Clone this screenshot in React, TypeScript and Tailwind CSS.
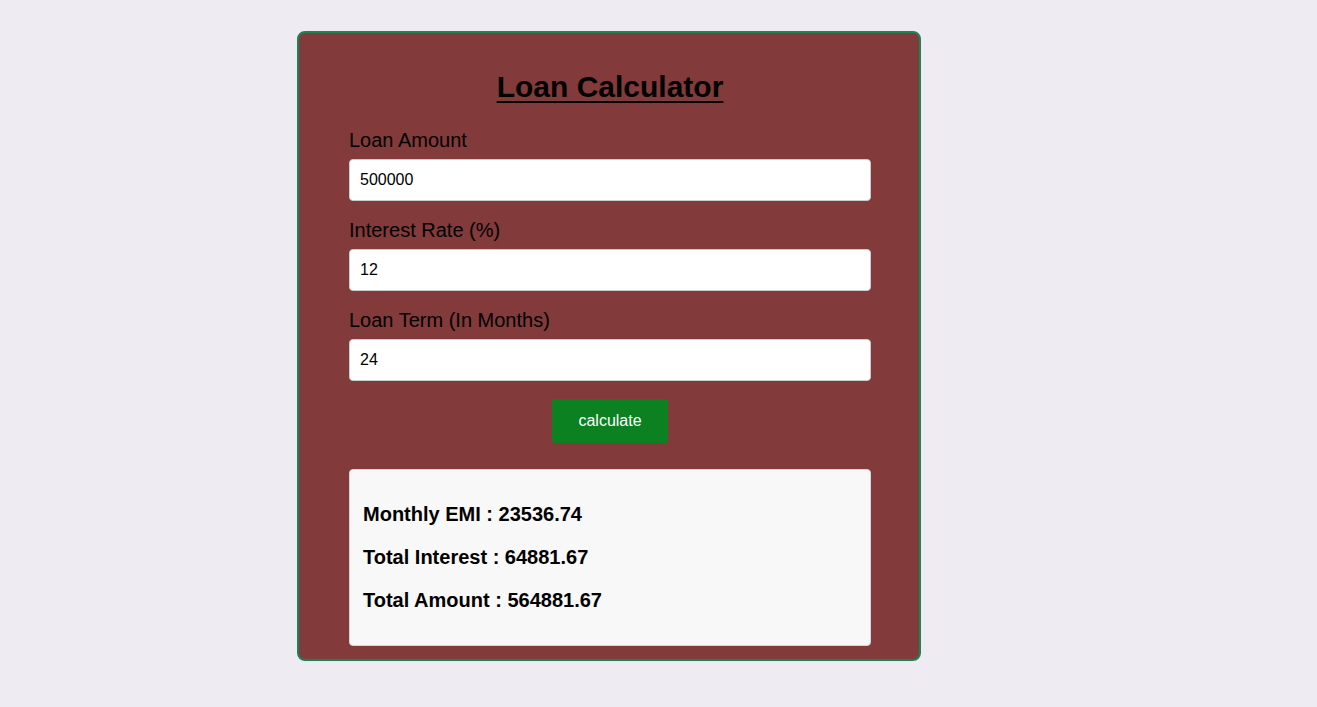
export default function App() {
  const fields = [
    { label: "Loan Amount", value: "500000" },
    { label: "Interest Rate (%)", value: "12" },
    { label: "Loan Term (In Months)", value: "24" },
  ];

  return (
    <div className="min-h-screen bg-[#eeebf2] pt-[31px] font-['Liberation_Sans',Arial,sans-serif]">
      <div className="ml-[297px] w-[624px] rounded-[8px] border-2 border-[#1b8456] bg-[#833a3b] pb-[13px] pl-[50px] pr-[48px] pt-[37px]">
        <h1 className="text-center text-[30px] font-bold leading-[34px] text-black underline decoration-2 underline-offset-[4px]">
          Loan Calculator
        </h1>

        <div className="mt-[25px]">
          {fields.map((f) => (
            <div key={f.label} className="mb-[18px] last:mb-0">
              <label className="mb-[7px] block text-[20px] leading-[23px] text-black">
                {f.label}
              </label>
              <input
                type="text"
                defaultValue={f.value}
                className="block h-[42px] w-full rounded-[4px] border border-[#cccccc] bg-white px-[10px] text-[16px] text-black outline-none"
              />
            </div>
          ))}
        </div>

        <div className="mt-[18px] flex justify-center">
          <button
            type="button"
            className="h-[44px] w-[116px] rounded-[3px] bg-[#0b8122] text-[16px] text-white"
          >
            calculate
          </button>
        </div>

        <div className="mt-[26px] rounded-[4px] border border-[#d6d6d6] bg-[#f8f8f8] px-[13px] pb-[13px] pt-[13px]">
          <p className="my-5 text-[20px] font-bold leading-[23px] text-black">
            Monthly EMI : 23536.74
          </p>
          <p className="my-5 text-[20px] font-bold leading-[23px] text-black">
            Total Interest : 64881.67
          </p>
          <p className="my-5 text-[20px] font-bold leading-[23px] text-black">
            Total Amount : 564881.67
          </p>
        </div>
      </div>
    </div>
  );
}
